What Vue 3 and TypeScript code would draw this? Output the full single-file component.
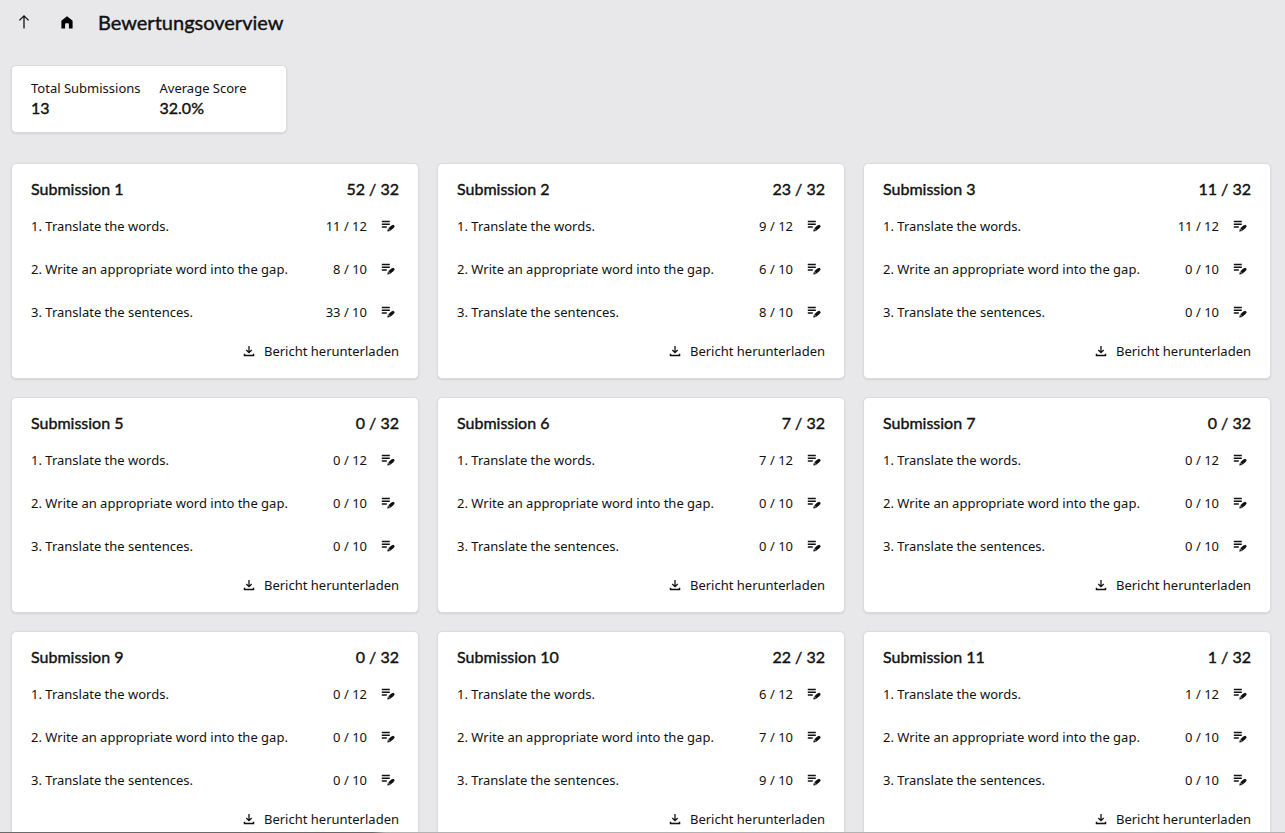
<script setup lang="ts">
interface Submission {
  id: number
  total: number
  scores: number[]
}

const tasks = [
  { title: '1. Translate the words.', max: 12 },
  { title: '2. Write an appropriate word into the gap.', max: 10 },
  { title: '3. Translate the sentences.', max: 10 },
]

const submissions: Submission[] = [
  { id: 1, total: 52, scores: [11, 8, 33] },
  { id: 2, total: 23, scores: [9, 6, 8] },
  { id: 3, total: 11, scores: [11, 0, 0] },
  { id: 5, total: 0, scores: [0, 0, 0] },
  { id: 6, total: 7, scores: [7, 0, 0] },
  { id: 7, total: 0, scores: [0, 0, 0] },
  { id: 9, total: 0, scores: [0, 0, 0] },
  { id: 10, total: 22, scores: [6, 7, 9] },
  { id: 11, total: 1, scores: [1, 0, 0] },
]
</script>

<template>
  <div class="page">
    <header class="topbar">
      <button class="icon-button" type="button" aria-label="Up">
        <svg width="14" height="16" viewBox="0 0 14 16" fill="none" stroke="#111" stroke-width="1.3">
          <path d="M7 14.5V2M2.4 6.4 7 1.8l4.6 4.6" />
        </svg>
      </button>
      <a class="icon-button" href="#" aria-label="Home">
        <svg width="12" height="13" viewBox="0 0 12 13" fill="#000">
          <path d="M6 .3.9 4.2Q.4 4.6.4 5.3V12.4H4.1V8.3Q4.1 7.300 5 7.300H7Q7.900 7.300 7.900 8.300V12.400H11.600V5.300Q11.600 4.600 11.100 4.200Z" />
        </svg>
      </a>
      <h1>Bewertungsoverview</h1>
    </header>

    <main>
      <section class="card summary">
        <div class="stat">
          <span>Total Submissions</span>
          <strong>13</strong>
        </div>
        <div class="stat">
          <span>Average Score</span>
          <strong>32.0%</strong>
        </div>
      </section>

      <section class="grid">
        <article v-for="s in submissions" :key="s.id" class="card submission">
          <div class="heading">
            <h2>Submission {{ s.id }}</h2>
            <span class="total">{{ s.total }} / 32</span>
          </div>
          <ul>
            <li v-for="(task, i) in tasks" :key="task.title">
              <span class="task">{{ task.title }}</span>
              <span class="score">{{ s.scores[i] }} / {{ task.max }}</span>
              <button class="edit" type="button" aria-label="Edit score">
                <svg width="14" height="12" viewBox="0 0 14 12" fill="none" stroke="#111">
                  <path d="M.8 1.500H8.800M.8 4.200H8.800M.8 6.900H5.800" stroke-width="1.5" />
                  <path d="M8.300 9.400 11.500 6.800" stroke-width="3.200" />
                  <path d="M11.200 7 12 6.400" stroke-width="3" stroke-linecap="round" />
                  <path d="M6.300 11.400 6.900 8.700 9.200 11Z" fill="#111" stroke="none" />
                </svg>
              </button>
            </li>
          </ul>
          <a class="download" href="#">
            <svg width="12" height="12" viewBox="0 0 12 12" fill="none" stroke="#111">
              <path d="M6 1V7.500M3.300 5 6 7.700 8.700 5" stroke-width="1.3" />
              <path d="M1.500 8.800V10.500H10.500V8.800" stroke-width="1.5" />
            </svg>
            <span>Bericht herunterladen</span>
          </a>
        </article>
      </section>
    </main>
  </div>
</template>

<style>
body {
  margin: 0;
  background: #e8e8ea;
}
</style>

<style scoped>
.page {
  height: 100vh;
  overflow: hidden;
  color: #111;
  background: #e8e8ea;
  font-family: "Noto Sans", sans-serif;
  font-size: 13px;
  line-height: 20px;
}

.page::after {
  content: "";
  position: fixed;
  right: 0;
  bottom: 0;
  left: 0;
  height: 1px;
  background: linear-gradient(90deg, #6a6a6a 29%, #b2b2b2 30%);
}

.topbar {
  display: flex;
  align-items: center;
  height: 44px;
  padding-left: 12px;
}

.icon-button {
  display: flex;
  align-items: center;
  justify-content: center;
  width: 24px;
  height: 24px;
  margin-right: 19px;
  padding: 0;
  border: 0;
  background: none;
}

h1,
h2,
.total,
strong {
  margin: 0;
  font-family: Lato, sans-serif;
  font-weight: 400;
  -webkit-text-stroke: 0.4px currentColor;
}

h1 {
  font-size: 20px;
  line-height: 28px;
}

main {
  padding: 21px 14px 0 11px;
}

.card {
  box-sizing: border-box;
  border: 1px solid #dcdcde;
  border-radius: 5px;
  background: #fff;
  box-shadow: 0 1px 2px rgba(0, 0, 0, 0.1);
}

.summary {
  display: flex;
  gap: 19px;
  width: 276px;
  margin-bottom: 30px;
  padding: 12px 19px 14px;
}

.stat {
  display: flex;
  flex-direction: column;
}

strong {
  font-size: 16px;
  line-height: 20px;
}

.stat strong {
  line-height: 20px;
}

.grid {
  display: grid;
  grid-template-columns: repeat(3, minmax(0, 1fr));
  gap: 18px;
}

.submission {
  padding: 13px 19px 15px;
}

.heading {
  display: flex;
  justify-content: space-between;
  margin-bottom: 3px;
}

h2,
.total {
  font-size: 16px;
  line-height: 24px;
}

ul {
  margin: 0 0 6px;
  padding: 0;
  list-style: none;
}

li {
  display: flex;
  align-items: center;
  height: 43px;
}

.task {
  flex: 1;
}

.edit {
  display: flex;
  margin: 0 4px 0 14px;
  padding: 0;
  border: 0;
  background: none;
}

.download {
  display: flex;
  align-items: center;
  justify-content: flex-end;
  gap: 9px;
  height: 24px;
  color: inherit;
  text-decoration: none;
}
</style>
